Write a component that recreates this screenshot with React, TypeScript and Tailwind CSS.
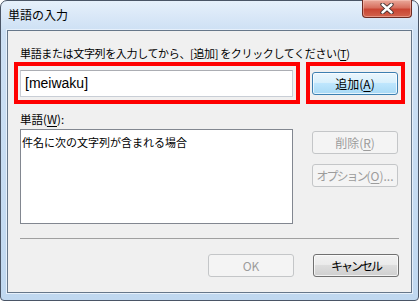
import type { ReactNode } from 'react';

const jp = "font-['Noto_Sans_CJK_JP','Noto_Sans_CJK_SC',sans-serif]";

type Variant = 'hot' | 'normal' | 'disabled';

function Btn({ children, variant = 'normal' }: { children: ReactNode; variant?: Variant }) {
  const look =
    variant === 'hot'
      ? 'border-[#3c7fb1] bg-[linear-gradient(#eaf6fd,#d9f0fc_45%,#bee6fd_50%,#a7d9f5)] text-black shadow-[inset_0_0_0_1px_rgba(255,255,255,0.7)]'
      : variant === 'disabled'
        ? 'border-[#c4c6c8] bg-[#f4f4f4] text-[#9c9c9c]'
        : 'border-[#707070] bg-[linear-gradient(#f2f2f2,#ebebeb_45%,#dddddd_50%,#cfcfcf)] text-black shadow-[inset_0_0_0_1px_rgba(255,255,255,0.7)]';
  return (
    <div className={`h-[23px] w-[86px] shrink-0 rounded-[3px] border flex items-center justify-center text-[12px] leading-none ${jp} ${look}`}>
      {children}
    </div>
  );
}

function CloseGlyph() {
  return (
    <svg width="14" height="11" viewBox="0 0 14 11">
      <path d="M2.5 1.5 L11.5 9.5 M11.5 1.5 L2.5 9.5" stroke="#3a2a2a" strokeWidth="4.2" strokeLinecap="round" />
      <path d="M2.5 1.5 L11.5 9.5 M11.5 1.5 L2.5 9.5" stroke="#ffffff" strokeWidth="2.4" strokeLinecap="round" />
    </svg>
  );
}

export default function App() {
  return (
    <div className="w-[419px] h-[301px] overflow-hidden bg-white">
      <div className="w-[419px] h-[301px] flex flex-col rounded-t-[7px] rounded-b-[4px] border border-[#4a5566] bg-[linear-gradient(180deg,#e6f0fb_0px,#cde0f4_30px,#c0d8f0_100%)] px-[5px] pb-[6px]">
        {/* Title bar */}
        <div className="h-[28px] shrink-0 flex items-start justify-between">
          <span className={`pl-[2px] pt-[6px] text-[12px] leading-[16px] text-black ${jp}`}>単語の入力</span>
          <div className="-mt-px mr-px w-[50px] h-[18px] rounded-b-[4px] border border-t-0 border-[#6e2b22] bg-[linear-gradient(#eaa99b,#d8705f_45%,#c94533_55%,#d2634d)] shadow-[inset_0_0_0_1px_rgba(255,210,200,0.45)] flex items-center justify-center">
            <CloseGlyph />
          </div>
        </div>

        {/* Content panel */}
        <div className="flex-1 border border-[#e6f0fb]">
          <div className={`h-full border border-[#66778a] bg-[#f0f0f0] px-[12px] pt-[14px] flex flex-col text-black ${jp}`}>
            <div className="text-[11px] leading-[16px] tracking-[-0.35px]">
              単語または文字列を入力してから、[追加] をクリックしてください(<u className="underline-offset-2">T</u>)
            </div>

            <div className="relative mt-[9px] flex items-center gap-[19px]">
              <div className="w-[273px] h-[27px] shrink-0 border border-[#c9ced6] border-t-[#abadb3] bg-white pl-[4px] pt-[3px] font-['Liberation_Sans',sans-serif] text-[14px] leading-[18px]">
                [meiwaku]
              </div>
              <Btn variant="hot">
                追加(<u className="underline-offset-2">A</u>)
              </Btn>
              {/* red annotation frames */}
              <div className="absolute left-[-6px] top-[-8px] w-[286px] h-[42px] border-4 border-[#ff0000]" />
              <div className="absolute left-[286px] top-[-8px] w-[99px] h-[42px] border-4 border-[#ff0000]" />
            </div>

            <div className="mt-[14px] text-[11.5px] leading-[16px]">
              単語(<u className="underline-offset-2">W</u>):
            </div>

            <div className="mt-[2px] flex items-start gap-[19px]">
              <div className="w-[273px] h-[95px] shrink-0 border border-[#828790] bg-white pl-[1px] pt-[4px] text-[11px] leading-[16px] text-[#000]">
                件名に次の文字列が含まれる場合
              </div>
              <div className="flex flex-col gap-[10px] pt-[2px]">
                <Btn variant="disabled">
                  削除(<u className="underline-offset-2">R</u>)
                </Btn>
                <Btn variant="disabled">
                  <span className="tracking-[-2px]">オプション</span>(<u className="underline-offset-2">O</u>)...
                </Btn>
              </div>
            </div>

            <div className="mt-[14px] h-px bg-[#a0a0a0]" />

            <div className="mt-[15px] flex justify-end gap-[19px]">
              <Btn variant="disabled">OK</Btn>
              <Btn>
                <span className="tracking-[-2px]">キャンセル</span>
              </Btn>
            </div>
          </div>
        </div>
      </div>
    </div>
  );
}
